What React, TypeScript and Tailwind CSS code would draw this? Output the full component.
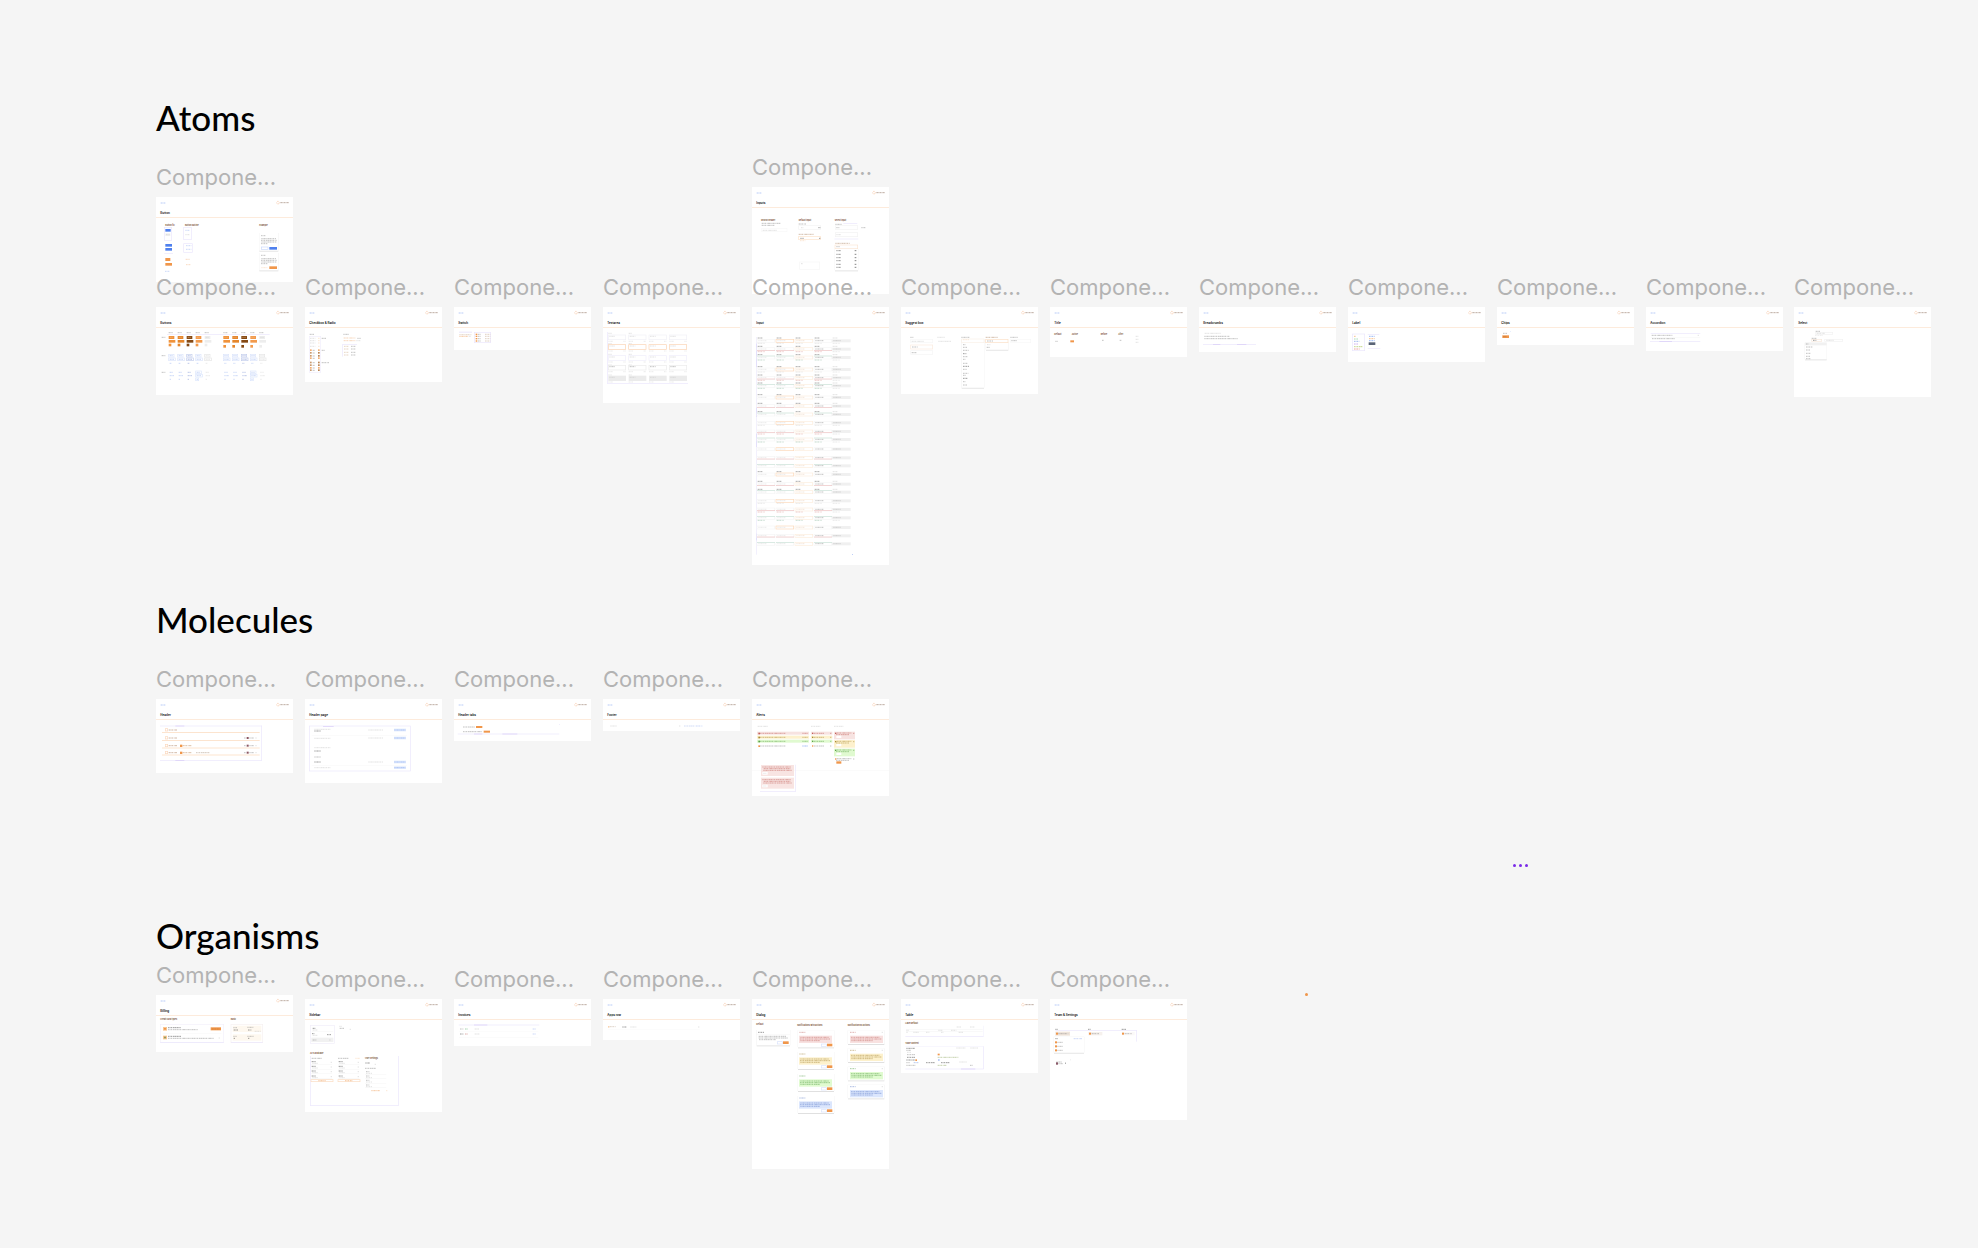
type Mark =
  | { k: "box"; x: number; y: number; w: number; h: number; c: string }
  | { k: "line"; x: number; y: number; w: number; h: number; c: string }
  | { k: "ink"; x: number; y: number; w: number; c: string }
  | { k: "text"; x: number; y: number; s: string }
  | { k: "card"; x: number; y: number; w: number; h: number };

const ORANGE = "#f0964a";
const BLUE = "#4f80ee";
const SKY = "#9db7f5";
const LILAC = "#ebe6fc";
const GRAY = "#8a8a8a";
const PALE = "#c9c9c9";
const DARK = "#3d3d3d";
const RED = "#c2605a";
const GREEN = "#5da04a";
const PEACH = "#fbd3ae";

// Thumbnails are drawn on a 411-unit wide grid, three units per pixel.
const b = (x: number, y: number, w: number, h: number, c = ORANGE): Mark => ({ k: "box", x, y, w, h, c });
const o = (x: number, y: number, w: number, h: number, c = LILAC): Mark => ({ k: "line", x, y, w, h, c });
const i = (x: number, y: number, w: number, c = GRAY): Mark => ({ k: "ink", x, y, w, c });
const t = (x: number, y: number, s: string): Mark => ({ k: "text", x, y, s });
const card = (x: number, y: number, w: number, h: number): Mark => ({ k: "card", x, y, w, h });
const rep = (ys: number[], f: (y: number, n: number) => Mark[]) => ys.flatMap(f);

const buttonStates: Mark[] = [
  t(28, 86, "Button fill"), t(87, 86, "Button outline"), t(310, 86, "Example"),
  o(25, 91, 22, 39), b(28, 96, 16, 8, BLUE), b(28, 109, 15, 8, "#f1f1f1"), i(30, 113, 11, PALE),
  b(28, 141, 20, 8, BLUE), b(28, 153, 20, 8, BLUE), b(25, 168, 26, 2, LILAC),
  b(28, 183, 15, 9), b(28, 198, 20, 8), i(27, 223, 15, SKY),
  o(83, 91, 23, 37), i(88, 100, 12, SKY), i(88, 113, 12, PALE), o(83, 140, 26, 26), i(90, 146, 16, SKY), i(90, 157, 16, SKY),
  i(89, 187, 12, "#f5b988"), i(90, 203, 15, "#f5b988"),
  card(310, 108, 57, 53), i(315, 116, 13), i(316, 125, 44), i(315, 130, 47), i(316, 135, 46), i(315, 140, 20),
  o(316, 150, 20, 7, "#c9d8fb"), b(340, 150, 23, 8, BLUE),
  card(310, 168, 57, 52), i(315, 175, 13), i(316, 185, 44), i(315, 190, 47), i(316, 195, 46), i(315, 200, 20),
  i(316, 212, 18, PEACH), b(340, 208, 23, 8),
];

const tones = ["#f0933c", "#e5862c", "#854914", "#f29a4d", "#ededed"];
const buttons: Mark[] = [
  b(33, 81, 308, 2, LILAC), i(17, 91, 11), i(17, 146, 11), i(17, 196, 11),
  ...[38, 202].flatMap((x0, g) => tones.flatMap((c, n) => {
    const x = x0 + n * 27;
    const edge = n === 4 ? "#e4e4e4" : n === 2 ? "#c2cdec" : "#dbe4fb";
    const ink = n === 4 ? "#d8d8d8" : n === 2 ? "#7f95d6" : SKY;
    return [
      i(x, 77, 12), b(x, 87, 17, 9, c), i(x + 3, 91, 10, n === 4 ? "#cfcfcf" : "#f7c796"),
      b(x, 99, 20, 8, c), b(x, 110 + g * 4, 8, 8, c),
      o(x, 142, 16, 8, edge), i(x + 3, 146, 10, ink), o(x, 153, 20, 8, edge), i(x + 3, 157, 14, ink), i(x + 3, 169, 6, ink),
      i(x + 3, 196, 10, ink), i(x + 3, 206, 14, ink), i(x + 3, 217, 5, ink),
      ...(n === 3 ? [o(x, 192, 17, 8, "#dce6fd"), o(x, 202, 20, 8, "#dce6fd"), o(x, 213, 9, 8, "#dce6fd")] : []),
    ];
  })),
];

const checkboxes: Mark[] = [
  i(14, 82, 13), o(13, 88, 34, 108, "#f0edfc"), i(50, 94, 14), i(50, 130, 10), i(50, 167, 22),
  ...rep([94, 101, 108, 118], (y) => [i(15, y, 16, PALE), i(39, y, 6, PEACH)]),
  ...rep([130, 138, 147, 154, 167, 175, 183, 190], (y, n) => [
    b(15, y - 3, 5, 5, n % 3 ? "#c99a6e" : "#f3ae72"), i(23, y, 8, GRAY), b(39, y - 3, 5, 5, n % 3 ? "#b98453" : "#f3ae72")]),
  i(115, 82, 17), ...rep([93, 101], (y) => [i(116, y, 35, "#f3b27e")]), i(157, 94, 10), i(154, 101, 12, PALE),
  b(112, 112, 44, 2, LILAC), b(112, 112, 2, 37, LILAC), ...rep([118, 126, 136, 144], (y) => [i(117, y, 14, "#d2b08f"), i(138, y, 15)]),
];

const switches: Mark[] = [
  b(15, 74, 39, 3, LILAC), i(16, 83, 36, "#cbb39b"), i(16, 88, 26, ORANGE), i(44, 88, 8, PALE), o(61, 76, 49, 31),
  ...rep([82, 88, 95, 102], (y) => [b(65, y - 2, 5, 4), i(72, y, 9), i(93, y, 16, "#c4a78a")]),
];

const textareas: Mark[] = [
  b(12, 75, 2, 154, LILAC), b(12, 228, 243, 2, LILAC),
  ...[0, 1, 2, 3].flatMap((n) => {
    const x = 16 + n * 61;
    return [
      ...rep([79, 110, 142, 174, 204], (y) => (n < 2 ? [i(x, y, 10, PALE)] : [])),
      ...rep([84, 113, 146, 175], (y, r) => [
        o(x, y, 52, 14, ["#f1f0f7", "#fbd2b2", "#efedfb", "#ebebeb"][r]), i(x + 3, y + 4, 17, r === 3 ? GRAY : PALE),
        i(x, y + 19, 13, "#d9d9d9"), i(x + 45, y + 19, 8, "#d9d9d9")]),
      b(x, 206, 53, 16, "#ebebeb"), i(x + 3, 211, 17, PALE), i(x, 225, 14, "#d9d9d9"),
    ];
  }),
];

const inputsOld: Mark[] = [
  t(27, 102, "Search header"), i(29, 109, 57), i(29, 115, 38), o(29, 124, 76, 10, "#f8f8f8"), i(32, 130, 43, PALE),
  t(140, 102, "Default input"), i(140, 111, 22), o(140, 116, 66, 11, "#f4f4f4"), i(147, 122, 8, PALE), i(199, 122, 6, DARK),
  i(140, 142, 46, "#ad8462"), o(140, 148, 65, 10, "#fde3cb"), i(145, 154, 10, DARK), i(201, 154, 5, DARK), i(144, 161, 16, PEACH),
  o(143, 225, 60, 22, "#f6f6f6"), i(147, 230, 6, PALE),
  t(248, 102, "Select input"), b(274, 108, 42, 2, LILAC), i(250, 112, 20), o(250, 116, 67, 11, "#f4f4f4"), i(253, 122, 9), i(328, 122, 12),
  o(250, 137, 67, 12, "#f2f2f2"), i(253, 143, 14, PALE), b(247, 155, 72, 2, LILAC), i(250, 169, 43, "#ad8462"), o(249, 174, 68, 11, "#fbe6d4"), i(253, 179, 10),
  card(249, 186, 69, 64),
  ...rep([191, 202, 212, 221, 232, 241], (y) => [i(253, y, 14, DARK), i(308, y, 6, "#111111")]),
];

const inputRows = [101, 126, 151, 187, 212, 236, 271, 297, 322, 347, 373, 397, 426, 452, 476, 502, 531, 555, 581, 607, 632, 661, 686, 710];
const inputGrid: Mark[] = [
  b(13, 90, 1, 653, "#d8d2f8"), b(13, 110, 2, 70, "#dcd8fb"), b(13, 300, 2, 30, "#dcd8fb"), b(13, 380, 2, 40, "#dcd8fb"), b(13, 680, 2, 20, "#dcd8fb"), b(300, 741, 3, 2, SKY),
  ...rep(inputRows, (y, r) => {
    const g = Math.floor(r / 3);
    const kind = r % 3;
    const label = g < 3 || g === 5;
    const helper = g < 2 || g === 3 || g === 6;
    const accent = kind === 1 ? "#efc4c4" : "#cbe3d9";
    return [15, 72, 129, 186, 240].flatMap((x, n) => [
      ...(label ? [i(x + 2, y - 8, 16, n === 4 ? PALE : "#606060")] : []),
      ...(n === 4
        ? [b(x, y - 4, 56, 9, "#f0f0f0"), i(x + 4, y, 22, "#b0b0b0")]
        : [o(x, y - 4, 53, 9, n === 2 ? "#fdeddd" : n === 1 && kind === 0 ? "#fcd9b9" : "#f5f5f5"),
           i(x + 4, y, 24, n === 3 ? GRAY : n === 2 ? "#ecd2bb" : "#d9d9d9")]),
      ...(kind && n !== 2 && n !== 4 ? [b(x, kind === 1 ? y + 3 : y - 5, 54, 2, accent)] : []),
      ...(helper ? [i(x + 2, y + 8, 21, kind === 0 || n === 4 ? "#d6d6d6" : kind === 1 ? "#df9b98" : "#91bda4")] : []),
    ]);
  }),
];

const suggest: Mark[] = [
  i(28, 91, 9), i(109, 91, 22, PALE), i(181, 91, 24), i(254, 91, 36, "#ad8462"), i(328, 91, 22),
  o(29, 97, 66, 10, "#f7f7f7"), i(32, 103, 36, PALE), i(112, 103, 38, PALE), o(29, 114, 66, 12, "#fbebdd"), i(33, 120, 17), o(29, 131, 66, 11, "#f5f5f5"), i(32, 137, 16),
  card(182, 96, 67, 146), i(186, 98, 18, PEACH), o(182, 96, 67, 11, "#f9f0e8"),
  ...rep([113, 121, 130, 140, 149, 157, 169, 178, 187, 199, 205, 214, 224, 234], (y, n) => [i(186, y, 7 + (n * 5) % 12, n % 4 === 3 ? DARK : GRAY)]),
  card(255, 106, 67, 22), o(254, 97, 67, 10, "#fde0c6"), i(258, 102, 19), i(258, 113, 10, PALE), i(257, 121, 10),
  o(329, 97, 60, 10, "#f8f8f8"), i(331, 101, 17),
];

const headings: Mark[] = [
  t(13, 85, "Default"), t(65, 85, "Active"), t(152, 85, "Before"), t(205, 85, "After"), i(16, 103, 7), b(61, 100, 11, 6), i(156, 100, 6), i(209, 100, 6),
  ...rep([88, 97, 106], (y) => [i(257, y, 9, PALE)]),
];
const breadcrumbs: Mark[] = [i(17, 79, 48, PALE), i(16, 88, 75), i(16, 95, 100), b(12, 112, 159, 2, LILAC), b(42, 112, 22, 2, "#d8ccf8"), b(114, 112, 28, 2, "#d8ccf8")];
const labels: Mark[] = [
  o(13, 81, 37, 50),
  ...rep([88, 96, 103, 111, 119, 126], (y, n) => [i(18, y, [6, 12, 16, 12, 26, 17][n], ["#ef8420", "#5fc077", "#3f70da", "#a866df", "#8cb020", "#dc4c48"][n])]),
  b(59, 81, 35, 2, LILAC), ...rep([88, 95, 101], (y, n) => [i(63, y, 17, ["#3370ee", "#f08020", "#3370ee"][n])]), b(62, 106, 20, 8, "#5a6477"), b(59, 123, 38, 2, LILAC),
];
const chips: Mark[] = [i(18, 79, 12), b(40, 72, 1, 2, SKY), b(16, 85, 20, 8), i(19, 89, 9, "#9f5e20")];
const accordion: Mark[] = [
  b(14, 78, 149, 2, LILAC), i(17, 85, 62), i(155, 85, 5, PALE), b(14, 90, 149, 1, "#eeeeee"), i(18, 95, 69), b(12, 102, 151, 2, LILAC), b(40, 102, 38, 2, "#d8ccf8"),
];
const select: Mark[] = [
  i(65, 73, 15), o(65, 76, 51, 6, "#f2f2f2"), i(68, 79, 24, PALE), i(63, 85, 23, "#dddddd"), i(53, 94, 16), o(53, 97, 30, 6, "#f8e9dd"), i(57, 100, 10, DARK),
  o(92, 97, 54, 6, "#f2f2f2"), i(97, 100, 22, PALE), card(33, 107, 65, 50), b(33, 107, 65, 8, "#f1f1f1"),
  ...rep([111, 120, 129, 139, 148, 155], (y, n) => [i(36, y, [8, 20, 12, 15, 12, 15][n])]),
];

const header: Mark[] = [
  b(12, 80, 306, 2, LILAC), b(12, 183, 306, 2, LILAC), b(315, 80, 2, 105, LILAC), b(58, 80, 27, 2, "#d8ccf8"), b(58, 183, 27, 2, "#d8ccf8"),
  ...rep([93, 117, 140, 161], (y, n) => [
    b(18, y + 6, 293, 2, "#fbd7b7"), o(28, y - 4, 7, 7, "#fbd8be"), i(38, y, 26, "#a97957"),
    ...(n ? [i(264, y, 6, GRAY), b(272, y - 3, 6, 6, "#8b5560"), i(280, y, 13), i(298, y, 4, PALE)] : []),
    ...(n > 1 ? [b(72, y - 3, 7, 7), i(80, y, 27, "#bc8655")] : [])]),
  i(120, 161, 42, "#ad9680"),
];
const headerPage: Mark[] = [
  o(13, 81, 303, 135), b(54, 81, 32, 2, "#d8ccf8"), b(20, 108, 286, 1, "#f2f2f2"), b(20, 198, 286, 1, "#f2f2f2"),
  i(28, 91, 48, PALE), i(28, 96, 20, DARK), i(28, 118, 48, PALE), i(28, 146, 48, PALE), i(28, 156, 20, DARK), i(28, 174, 20), i(28, 189, 20, DARK), i(28, 206, 48, PALE),
  ...rep([93, 117, 189], (y) => [i(190, y, 45, PALE)]), ...rep([93, 117, 189, 206], (y) => [b(267, y - 4, 36, 8, "#dfe9fd"), i(268, y, 33, "#7ea2ee")]),
];
const headerTabs: Mark[] = [i(27, 84, 36), b(66, 81, 19, 6), i(27, 98, 57), b(89, 95, 19, 6), b(11, 104, 305, 2, LILAC), b(60, 104, 25, 2, "#d8ccf8"), b(145, 104, 45, 2, "#d8ccf8"), b(315, 75, 3, 2, LILAC)];
const footer: Mark[] = [i(22, 81, 20, PALE), i(228, 81, 4, PALE), i(243, 81, 32, "#a9bdf0"), i(278, 81, 20, SKY)];

const tints = ["#f7e3e1", "#fdf1cd", "#e0fad0", "#ffffff"];
const inks = [RED, "#a98a35", GREEN, GRAY];
const alerts: Mark[] = [
  i(17, 82, 30, PALE), i(177, 82, 28, PALE), i(246, 82, 28, PALE),
  ...rep([103, 115, 127, 141], (y, n) => [
    b(15, y - 5, 156, 9, tints[n]), b(177, y - 5, 64, 9, tints[n]), b(19, y - 2, 5, 5, n === 3 ? ORANGE : inks[n]), i(24, y, 76, inks[n]), i(151, y, 17, n === 3 ? BLUE : inks[n]),
    b(180, y - 2, 4, 4, n === 3 ? ORANGE : inks[n]), i(186, y, 30, inks[n]), i(234, y, 4, inks[n])]),
  ...rep([98, 123, 149, 175], (y, n) => [
    b(246, y, 63, 23, tints[n]), b(249, y + 3, 4, 4, n === 3 ? ORANGE : inks[n]), i(254, y + 4, 44, inks[n]), i(252, y + 9, 40, inks[n]), i(303, y + 5, 4, inks[n]),
    b(253, y + 12, 15, 7, n === 3 ? ORANGE : "#ffffff")]),
  b(0, 213, 411, 1, "#f3f3f3"),
  ...rep([198, 236], (y) => [b(27, y, 99, 33, "#f8e4e2"), i(31, y + 6, 85, RED), i(35, y + 11, 80, RED), i(34, y + 16, 85, RED), b(31, y + 21, 16, 8, "#ffffff"), i(34, y + 25, 9, PALE)]),
  b(130, 197, 2, 80, LILAC), b(24, 276, 108, 2, LILAC),
];

const billing: Mark[] = [
  t(13, 76, "Credit card types"), t(224, 76, "Basic"), o(13, 88, 190, 55, "#f3f0fb"), b(20, 115, 177, 1, "#f3f3f3"),
  b(21, 96, 12, 11, "#f9c691"), b(24, 99, 6, 5), i(36, 98, 38, DARK), i(36, 104, 89, GRAY), b(164, 97, 31, 9), i(168, 102, 22, "#c57429"),
  b(21, 122, 12, 11, "#f9c691"), b(24, 125, 6, 5, "#8f9b65"), i(36, 124, 40, DARK), i(36, 130, 138, GRAY), i(188, 129, 5, PALE),
  b(13, 142, 190, 2, LILAC), o(225, 88, 95, 55, "#f7f1f0"), b(230, 92, 86, 19, "#fef8ef"), b(230, 118, 86, 19, "#fef8ef"),
  i(232, 98, 11), i(233, 105, 15, DARK), i(274, 97, 18), i(276, 105, 10, DARK), i(296, 109, 18, PALE), i(232, 124, 10), i(233, 130, 4, DARK), i(274, 124, 20), i(276, 130, 4, DARK), b(225, 142, 95, 2, LILAC),
];
const sidebar: Mark[] = [
  o(16, 79, 72, 54, "#f1eef9"), i(23, 88, 9, DARK), i(23, 93, 16, PALE), b(20, 98, 65, 1, "#eeeeee"), i(21, 104, 8, DARK), i(23, 109, 16, PALE), i(66, 107, 12, DARK), b(19, 116, 66, 13, "#f1f1f1"), i(23, 123, 11), i(72, 123, 6, PALE),
  i(103, 82, 8, PALE), i(104, 88, 14), i(134, 91, 5, PALE), t(15, 166, "All's available"),
  b(15, 171, 2, 149, LILAC), b(15, 319, 266, 2, LILAC), b(280, 171, 2, 149, LILAC),
  i(20, 178, 31), i(99, 178, 32), i(151, 178, 14, PEACH),
  ...[20, 101].flatMap((x) => rep([188, 202, 216, 231], (y) => [i(x, y, 12, DARK), i(x + 2, y + 5, 17, PALE), i(x + 57, y + 2, 4, PALE), b(x - 2, y + 8, 64, 1, "#efefef")])),
  o(18, 242, 66, 6, "#fbdcc0"), i(40, 245, 22, ORANGE), o(99, 242, 66, 6, "#fbdcc0"), i(120, 245, 22, ORANGE),
  t(180, 181, "User settings"), i(181, 192, 13, DARK), i(209, 196, 5, PALE), i(180, 208, 33),
  ...rep([218, 231, 244, 258], (y) => [i(183, y, 10), i(183, y + 5, 18, PALE), b(180, y + 8, 64, 1, "#efefef")]), i(199, 275, 26, ORANGE), i(243, 275, 4, PEACH),
];
const invoices: Mark[] = [
  b(14, 77, 242, 2, LILAC), b(60, 77, 40, 2, "#d8ccf8"), i(18, 90, 10), i(33, 90, 9, "#4fae68"), i(62, 90, 14, PALE), i(236, 90, 10, SKY),
  b(15, 97, 238, 1, "#f6f6f6"), i(18, 105, 10, DARK), i(33, 105, 9, RED), i(62, 105, 16, PALE), i(236, 105, 10, SKY), b(15, 114, 238, 1, "#f1f1f1"),
];
const appsRow: Mark[] = [b(15, 81, 4, 5, PEACH), i(20, 83, 18, "#c2ad98"), i(58, 84, 12, DARK), i(82, 84, 19, PALE), i(285, 84, 4, PALE), b(15, 90, 275, 1, "#f5f5f5")];

const noteTints = ["#f8e1e0", "#fdf1cc", "#e0fbd0", "#dbe6fd"];
const noteInks = ["#c36c68", "#a5873c", "#549d45", "#607fc9"];
const dialog: Mark[] = [
  t(13, 78, "Default"), t(136, 80, "Notifications with actions"), t(287, 80, "Notification no actions"),
  card(14, 93, 100, 46), i(18, 100, 18, DARK), b(14, 105, 100, 1, "#eeeeee"), i(20, 112, 83), i(20, 117, 88), i(21, 122, 50), o(76, 128, 15, 7, "#d8e2fb"), b(93, 127, 17, 8),
  ...rep([94, 159, 225, 291], (y, n) => [
    card(138, y, 108, 51), i(142, y + 6, 18, noteInks[n]), b(141, y + 16, 99, 22, noteTints[n]),
    i(145, y + 21, 86, noteInks[n]), i(144, y + 26, 90, noteInks[n]), i(145, y + 31, 60, noteInks[n]), o(208, y + 41, 15, 7, "#d8e2fb"), b(225, y + 40, 16, 8)]),
  ...rep([94, 148, 203, 257], (y, n) => [
    card(288, y, 109, 41), i(294, y + 6, 17, noteInks[n]), i(389, y + 6, 4, PALE), b(294, y + 16, 99, 22, noteTints[n]),
    i(297, y + 21, 86, noteInks[n]), i(298, y + 26, 90, noteInks[n]), i(298, y + 31, 64, noteInks[n])]),
];
const table: Mark[] = [
  t(13, 74, "Label default"), b(15, 90, 230, 1, "#ededed"), b(15, 98, 230, 1, "#ededed"), i(167, 84, 15, PALE), i(207, 84, 15, PALE), i(16, 94, 8, PALE), i(112, 94, 12, PALE), i(150, 94, 16, PALE),
  i(16, 100, 5, PALE), i(37, 100, 17, PALE), i(75, 100, 10, PALE), i(120, 100, 8, PALE), i(173, 100, 13, PALE), b(247, 80, 1, 32, LILAC), b(13, 111, 235, 2, LILAC),
  t(13, 134, "Table content"), i(16, 148, 26, DARK), i(16, 154, 14), i(18, 160, 12, PALE), i(18, 167, 24), i(18, 175, 24, DARK), i(16, 183, 26, DARK), i(16, 191, 10), i(38, 191, 16, "#7898e3"), i(75, 191, 27, DARK), i(120, 191, 25, DARK), i(16, 199, 27),
  i(166, 147, 27, PALE), i(208, 147, 23, PALE), b(110, 164, 6, 5), i(110, 175, 62, "#93aa65"), b(43, 181, 5, 5), b(111, 181, 5, 4, SKY), i(175, 189, 22, PALE), i(110, 199, 27, "#93aa65"), i(207, 199, 9),
  b(13, 142, 235, 1, LILAC), b(247, 142, 2, 68, LILAC), b(13, 209, 235, 2, LILAC), b(180, 209, 43, 2, "#d8ccf8"),
];
const team: Mark[] = [
  i(16, 91, 7, DARK), i(114, 91, 9, DARK), i(215, 91, 13, DARK), b(16, 93, 244, 2, LILAC), b(259, 93, 2, 35, LILAC), b(16, 98, 44, 12, "#efe4da"),
  b(18, 101, 6, 6), i(25, 104, 25), i(52, 104, 4, PALE), b(115, 99, 42, 10, "#f6f1ed"), b(117, 101, 6, 6), i(125, 104, 22), b(215, 99, 39, 10, "#fbf9f8"), b(216, 101, 6, 6), i(224, 104, 21),
  card(12, 113, 90, 48), i(16, 119, 8, DARK), i(71, 119, 26, "#9db5f3"),
  ...rep([130, 142, 154], (y) => [b(15, y - 3, 6, 6), i(22, y, 17)]),
  b(61, 181, 1, 3, PALE), b(18, 190, 6, 7, "#8a5868"), i(19, 189, 17), i(25, 194, 15), b(45, 191, 3, 3, "#888888"),
];

type FrameData = { x: string; y: string; h: number; title: string; marks: Mark[] };

const COLS = [
  "left-[156px]", "left-[305px]", "left-[454px]", "left-[603px]", "left-[752px]", "left-[901px]",
  "left-[1050px]", "left-[1199px]", "left-[1348px]", "left-[1497px]", "left-[1646px]", "left-[1794px]",
];
const f = (col: number, y: string, h: number, title: string, marks: Mark[]): FrameData => ({ x: COLS[col], y, h, title, marks });

const frames: FrameData[] = [
  f(0, "top-[163px]", 85, "Button", buttonStates),
  f(4, "top-[153px]", 107, "Inputs", inputsOld),
  ...([
    [88, "Buttons", buttons], [75, "Checkbox & Radio", checkboxes], [43, "Switch", switches], [96, "Textarea", textareas],
    [258, "Input", inputGrid], [87, "Suggest box", suggest], [50, "Title", headings], [45, "Breadcrumbs", breadcrumbs],
    [55, "Label", labels], [38, "Chips", chips], [44, "Accordion", accordion], [90, "Select", select],
  ] as [number, string, Mark[]][]).map(([h, title, marks], n) => f(n, "top-[273px]", h, title, marks)),
  ...([
    [74, "Header", header], [84, "Header page", headerPage], [42, "Header tabs", headerTabs], [32, "Footer", footer], [97, "Alerts", alerts],
  ] as [number, string, Mark[]][]).map(([h, title, marks], n) => f(n, "top-[665px]", h, title, marks)),
  f(0, "top-[961px]", 57, "Billing", billing),
  ...([
    [113, "Sidebar", sidebar], [47, "Invoices", invoices], [41, "Apps row", appsRow], [170, "Dialog", dialog], [74, "Table", table], [121, "Team & Settings", team],
  ] as [number, string, Mark[]][]).map(([h, title, marks], n) => f(n + 1, "top-[965px]", h, title, marks)),
];

function Shape({ m }: { m: Mark }) {
  switch (m.k) {
    case "box":
      return <rect x={m.x} y={m.y} width={m.w} height={m.h} fill={m.c} />;
    case "line":
      return <rect x={m.x} y={m.y} width={m.w} height={m.h} fill="none" stroke={m.c} strokeWidth={2} />;
    case "card":
      return (
        <g>
          <rect x={m.x - 1} y={m.y} width={m.w + 2} height={m.h} fill="#000" opacity={0.06} />
          <rect x={m.x} y={m.y + m.h} width={m.w} height={3} fill="#000" opacity={0.12} />
          <rect x={m.x} y={m.y} width={m.w} height={m.h} fill="#fff" />
        </g>
      );
    case "ink":
      return <line x1={m.x} x2={m.x + m.w} y1={m.y} y2={m.y} stroke={m.c} strokeWidth={3} strokeDasharray="4 1 2 1 5 2 3 1 6 1" opacity={0.5} />;
    case "text":
      return <text x={m.x} y={m.y} fontSize={6} fontWeight={700} fill="#7a5236">{m.s}</text>;
  }
}

function Frame({ x, y, h, title, marks }: FrameData) {
  return (
    <figure className={`absolute w-[137px] ${x} ${y}`}>
      <svg viewBox={`0 0 411 ${h * 3}`} className="absolute top-[34px] block w-full bg-white font-['Inter',sans-serif]" role="img" aria-label={title}>
        <line x1={14} x2={29} y1={18} y2={18} stroke={SKY} strokeWidth={3} strokeDasharray="4 1 3 1" opacity={0.7} />
        <circle cx={366} cy={17} r={4} fill="none" stroke="#f7c4a2" strokeWidth={2} strokeDasharray="5 2" />
        <line x1={373} x2={398} y1={17} y2={17} stroke="#8a6c5a" strokeWidth={3} strokeDasharray="5 1 3 1" opacity={0.55} />
        <text x={13} y={52} fontSize={9} fontWeight={600} fill="#000">{title}</text>
        <rect x={0} y={60} width={411} height={3} fill="#fdebdc" />
        {marks.map((m, n) => <Shape key={n} m={m} />)}
      </svg>
      <figcaption className="relative text-[22px] leading-7 whitespace-nowrap text-[#b3b3b3]">Compone...</figcaption>
    </figure>
  );
}

const HEADINGS = [
  { title: "Atoms", pos: "top-[93px]" },
  { title: "Molecules", pos: "top-[595px]" },
  { title: "Organisms", pos: "top-[911px]" },
];

export default function App() {
  return (
    <main className="relative min-h-screen overflow-hidden bg-[#f5f5f5] font-['Inter',sans-serif]">
      {HEADINGS.map((s) => (
        <h2 key={s.title} className={`absolute left-[156px] font-['Lato',sans-serif] text-[35px] leading-12 font-medium text-black ${s.pos}`}>{s.title}</h2>
      ))}
      {frames.map((fr, n) => <Frame key={n} {...fr} />)}
      <div className="absolute top-[864px] left-[1513px] flex gap-[3px]">
        <span className="size-[3px] rounded-full bg-[#7a2be8]" />
        <span className="size-[3px] rounded-full bg-[#7a2be8]" />
        <span className="size-[3px] rounded-full bg-[#7a2be8]" />
      </div>
      <span className="absolute top-[993px] left-[1305px] size-[3px] rounded-full bg-[#f0964a]" />
    </main>
  );
}
